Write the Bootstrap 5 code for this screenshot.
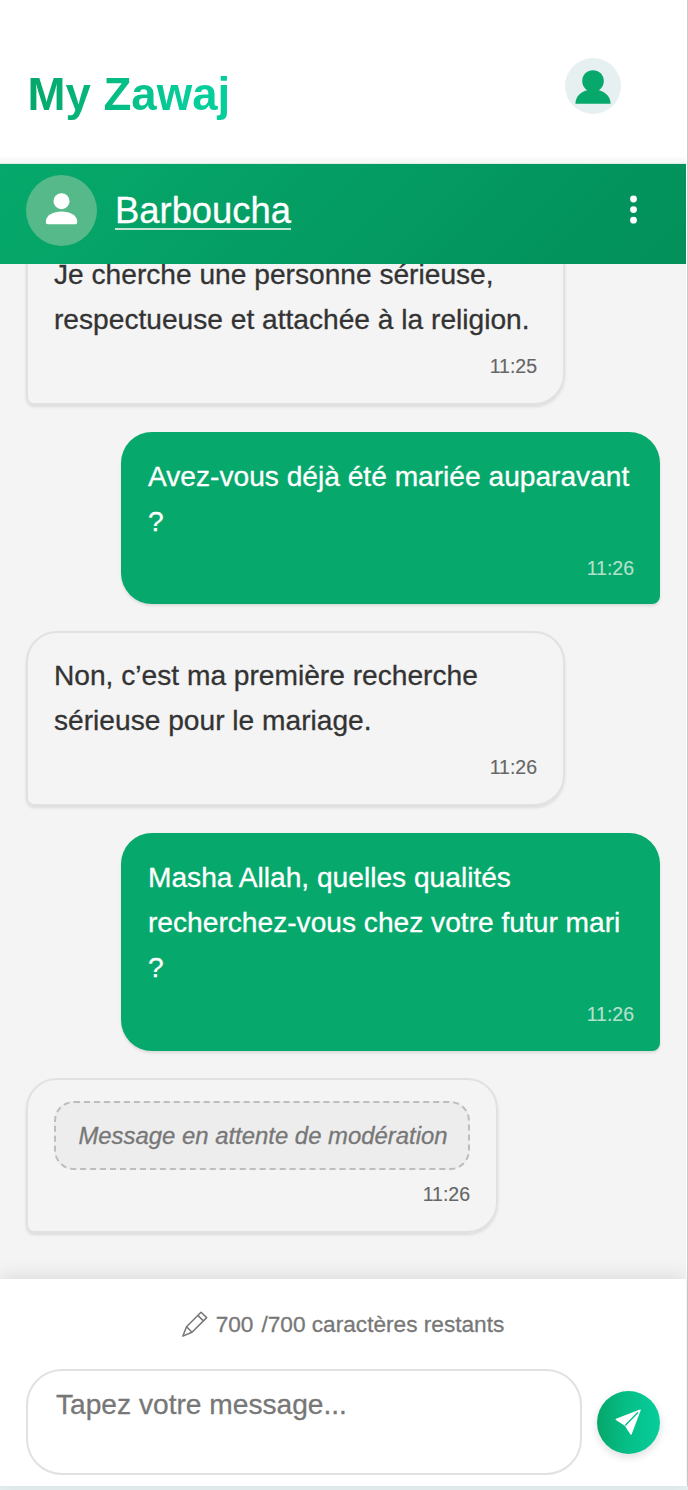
<!DOCTYPE html>
<html lang="fr">
<head>
<meta charset="utf-8">
<meta name="viewport" content="width=device-width, initial-scale=1">
<title>My Zawaj</title>
<link href="https://cdn.jsdelivr.net/npm/bootstrap@5.3.0/dist/css/bootstrap.min.css" rel="stylesheet">
<style>
body{font-family:"Liberation Sans",Arial,sans-serif;background:#fff;font-size:28.15px;line-height:45px;color:#333;overflow:hidden;-webkit-text-stroke:.3px}
.app{width:688px;height:1490px;border-right:1px solid #ccc;padding-right:1px}
.top{height:164px;padding:0 65px 0 27px;flex:none;background:linear-gradient(#fff 157px,#f9fbfa 158px,#f5f7f6 163px,#cde0d8 164px)}
.brand{font-size:45.6px;font-weight:700;line-height:60px;margin-top:65px;padding-left:.5px;background:linear-gradient(90deg,#06a669,#06bd86 45%,#06ce9b 80%);background-clip:text;-webkit-background-clip:text;color:transparent;-webkit-text-stroke:0}
.me{width:56px;height:56px;background:#e7f0f1;margin-top:58px}
.peer{height:100px;padding:0 26px 8px 26px;flex:none;background:linear-gradient(135deg,#06a96b,#028f5a);z-index:1}
.face{width:71px;height:71px;background:#56b989}
.peername{font-size:36.4px;color:#fff;border-bottom:2px solid #c3e5d7;text-decoration:none;padding-top:3px;margin-left:18px;height:39px;line-height:34px}
.peername:hover{color:#fff}
.dots{width:54px}
.feed{background:#f4f4f4;padding:0 26px 46px;gap:27px;min-height:0}
.bubble{border-radius:31px;box-shadow:0 2px 3px rgba(0,0,0,.1)}
.theirs{width:539px;border:2px solid #e0e1e1;border-bottom-left-radius:8px;padding:20px 26px 22px}
.mine{width:539px;background:#06a86b;color:#fff;border-bottom-right-radius:8px;padding:22px 26px 21px 27px}
.long{padding-bottom:22px}
.wait{width:472px;padding-top:21px}
.hour{font-size:19.5px;line-height:30px;margin-top:9px;text-align:right;color:#666;-webkit-text-stroke:.15px}
.mine .hour{color:#b5e1ce}
.pending{border:2px dashed #bcbdbd;border-radius:20px;background:#ededed;color:#777;font-size:23.9px;font-style:italic;height:69px;line-height:66px;white-space:nowrap;padding-left:2px}
.compose{height:207px;flex:none;background:#fff;padding:24px 26px 0;box-shadow:0 -3px 18px rgba(0,0,0,.1);z-index:1}
.count{font-size:22.65px;line-height:42px;color:#777}
.writer{margin-top:24px}
.entry{width:556px;height:106px;border:2px solid #e0e1e1;border-radius:36px;padding:11px 28px;font-size:28.15px;line-height:45px;resize:none;color:#777;overflow:hidden;outline:0;background:#fff}
.entry::placeholder{color:#777;opacity:1}
.send{width:63px;height:63px;background:linear-gradient(90deg,#06a669,#06bd86 45%,#06ce9b);box-shadow:0 3px 8px rgba(0,0,0,.14)}
.foot{height:4px;background:#e7f0f1;flex:none;margin-right:-2px}
</style>
</head>
<body>
<div class="app d-flex flex-column">
<header class="top d-flex justify-content-between align-items-start">
<h1 class="brand mb-0">My Zawaj</h1>
<div class="me rounded-circle"><svg width="56" height="56" viewBox="0 0 56 56" fill="#06a86b" class="d-block"><circle cx="28" cy="23" r="10.8"/><path d="M10.4 45.8C10.4 37.5 18 31.6 28 31.6s17.6 5.9 17.6 14.2z"/></svg></div>
</header>
<div class="peer d-flex align-items-center">
<div class="face rounded-circle"><svg width="71" height="71" viewBox="0 0 71 71" fill="#fff" class="d-block"><circle cx="35.5" cy="26.2" r="8"/><path d="M19.8 47c0-7 7.6-10.5 15.8-10.5S51.3 40 51.3 47q0 2.3-2 2.3H21.8q-2 0-2-2.3z"/></svg></div>
<a class="peername" href="#">Barboucha</a>
<svg class="dots ms-auto" height="34" viewBox="0 0 54 34" fill="#fff"><circle cx="27.5" cy="6" r="3.4"/><circle cx="27.5" cy="16.6" r="3.4"/><circle cx="27.5" cy="27.2" r="3.4"/></svg>
</div>
<main class="feed d-flex flex-column justify-content-end flex-grow-1 overflow-hidden">
<div class="bubble theirs">Je cherche une personne sérieuse, respectueuse et attachée à la religion.<div class="hour">11:25</div></div>
<div class="bubble mine align-self-end">Avez-vous déjà été mariée auparavant ?<div class="hour">11:26</div></div>
<div class="bubble theirs">Non, c’est ma première recherche sérieuse pour le mariage.<div class="hour">11:26</div></div>
<div class="bubble mine long align-self-end">Masha Allah, quelles qualités recherchez-vous chez votre futur mari ?<div class="hour">11:26</div></div>
<div class="bubble theirs wait"><div class="pending text-center">Message en attente de modération</div><div class="hour">11:26</div></div>
</main>
<footer class="compose">
<div class="count d-flex justify-content-center align-items-center"><svg width="26" height="26" viewBox="0 0 26 26" fill="none" stroke="#777" stroke-width="1.5" stroke-linejoin="round" class="me-2"><path d="M.9 25.1 4.5 15.7 19 1.2l5.7 5.4L10 21.3zM4.5 15.7l5.5 5.6M15.8 4.4l5.6 5.5"/></svg><span>700</span><span class="ms-2">/700 caractères restants</span></div>
<div class="writer d-flex align-items-center justify-content-between"><textarea class="entry" placeholder="Tapez votre message..."></textarea>
<button class="send btn rounded-circle border-0 p-0" aria-label="Envoyer"><svg width="63" height="63" viewBox="0 0 63 63" class="d-block"><path fill="#fff" stroke="#fff" stroke-width="1.2" stroke-linejoin="round" d="M19.2 28.4 43.2 19 34 43.3 28.5 34.6z"/><path d="M28.7 34 40.6 21.8" stroke="#06bf89" stroke-width="1.4" stroke-linecap="round"/></svg></button></div>
</footer>
<div class="foot"></div>
</div>
<script src="https://cdn.jsdelivr.net/npm/bootstrap@5.3.0/dist/js/bootstrap.bundle.min.js"></script>
</body>
</html>
